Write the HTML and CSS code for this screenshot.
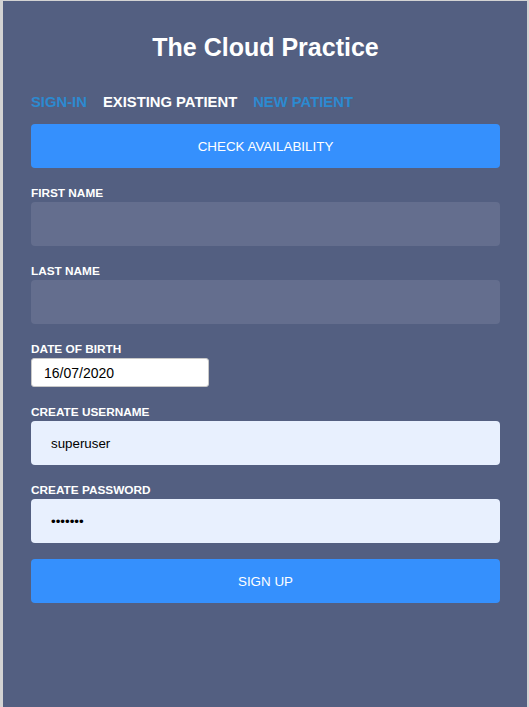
FILE: index.html
```html
<!DOCTYPE html>
<html lang="en">

<head>
    <meta charset="UTF-8">
    <meta name="viewport" content="width=device-width, initial-scale=1.0">
    <title>The Cloud Practice</title>
    <link rel="stylesheet" href="styles.css">
</head>

<body>
    <div class="panel">
        <h1 class="title">The Cloud Practice</h1>
        <div class="tabs">
            <a class="tab">SIGN-IN</a>
            <a class="tab active">EXISTING PATIENT</a>
            <a class="tab">NEW PATIENT</a>
        </div>
        <form>
            <button type="button" class="btn">CHECK AVAILABILITY</button>

            <div class="field">
                <label for="firstName">FIRST NAME</label>
                <input type="text" id="firstName" class="input">
            </div>
            <div class="field">
                <label for="lastName">LAST NAME</label>
                <input type="text" id="lastName" class="input">
            </div>
            <div class="field">
                <label for="dob">DATE OF BIRTH</label>
                <input type="text" id="dob" class="date-input" value="16/07/2020">
            </div>
            <div class="field">
                <label for="username">CREATE USERNAME</label>
                <input type="text" id="username" class="input filled" value="superuser">
            </div>
            <div class="field">
                <label for="password">CREATE PASSWORD</label>
                <input type="password" id="password" class="input filled" value="1234567">
            </div>

            <button type="button" class="btn signup">SIGN UP</button>
        </form>
    </div>
</body>

</html>
```

FILE: styles.css
```css
html,
body {
    height: 100%;
}

body {
    margin: 0;
    padding: 0;
    background-color: #d3d3d3;
    font-family: "Liberation Sans", Arial, sans-serif;
}

.panel {
    box-sizing: border-box;
    min-height: calc(100% - 1px);
    margin: 1px 2px 0 3px;
    padding: 32px 27px 0 28px;
    background-color: #535f81;
}

.title {
    margin: 0;
    font-size: 25px;
    line-height: 28px;
    font-weight: bold;
    color: #fff;
    text-align: center;
}

.tabs {
    display: flex;
    gap: 16px;
    margin-top: 32px;
}

.tab {
    font-size: 14.8px;
    line-height: 18px;
    font-weight: bold;
    color: #2c8ad0;
    cursor: pointer;
}

.tab.active {
    color: #fff;
}

form {
    display: flex;
    flex-direction: column;
    margin-top: 13px;
}

.btn {
    display: block;
    width: 100%;
    height: 44px;
    border: none;
    border-radius: 4px;
    background-color: #3590fd;
    color: #fff;
    font-family: "Liberation Sans", Arial, sans-serif;
    font-size: 13.4px;
    cursor: pointer;
}

.signup {
    margin-top: 16px;
}

.field {
    margin-top: 18px;
}

label {
    display: block;
    margin-bottom: 2px;
    font-size: 11.8px;
    line-height: 14px;
    font-weight: bold;
    color: #fff;
}

.input {
    display: block;
    box-sizing: border-box;
    width: 100%;
    height: 44px;
    padding: 0 20px;
    border: none;
    border-radius: 4px;
    background-color: #646e8e;
    color: #000;
    font-family: "Liberation Sans", Arial, sans-serif;
    font-size: 13.33px;
    outline: none;
}

.input.filled {
    background-color: #e8f0fe;
}

.date-input {
    display: block;
    box-sizing: border-box;
    width: 178px;
    height: 29px;
    padding: 0 12px;
    border: 1px solid #c8c8c8;
    border-radius: 3px;
    background-color: #fff;
    color: #000;
    font-family: "Liberation Sans", Arial, sans-serif;
    font-size: 14px;
    outline: none;
}
```
